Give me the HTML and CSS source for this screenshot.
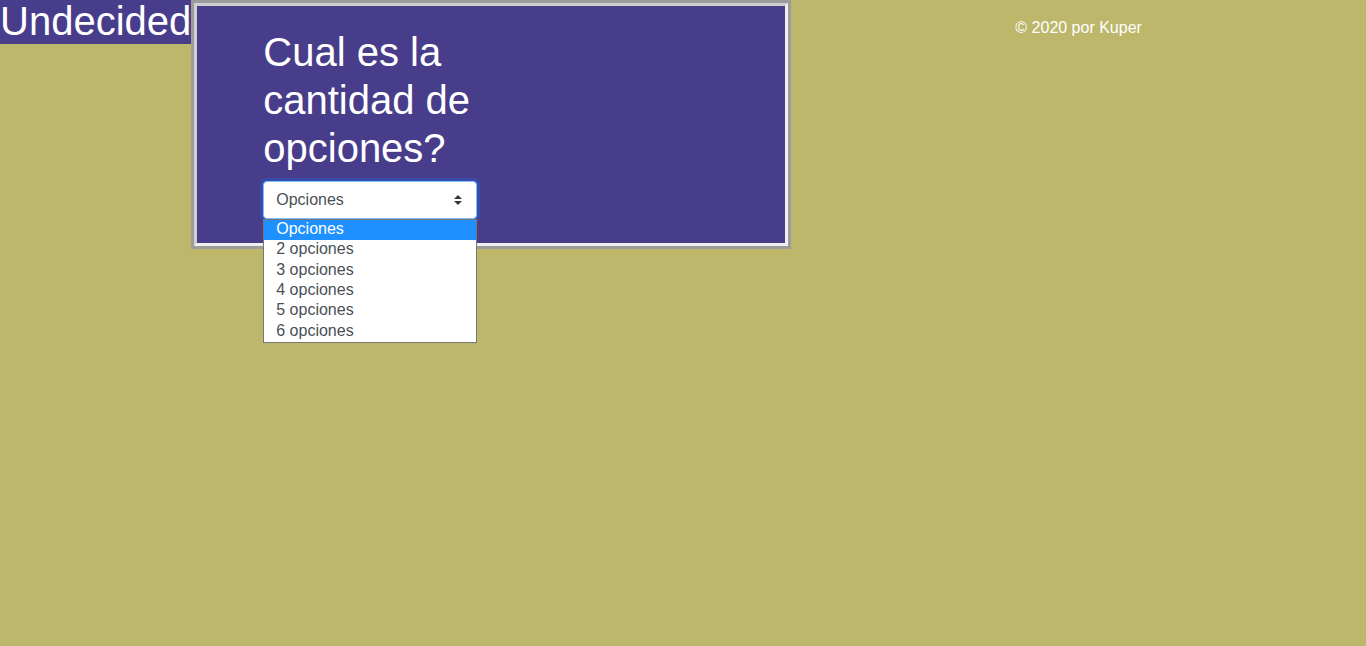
FILE: index.html
```html
<!DOCTYPE html>
<html lang="es">
<head>
<meta charset="utf-8">
<title>Undecided</title>
<link rel="stylesheet" href="styles.css">
</head>
<body>
<div class="page">
  <div class="brand">Undecided</div>
  <main class="panel">
    <div class="panel-inner">
      <div class="content">
        <h1 class="question">Cual es la cantidad de opciones?</h1>
        <div class="select-wrap">
          <div class="select">
            <span class="select-value">Opciones</span>
            <svg class="select-arrow" width="8" height="10" viewBox="0 0 4 5" aria-hidden="true"><path fill="#343a40" d="M2 0L0 2h4zm0 5L0 3h4z"/></svg>
          </div>
          <ul class="dropdown">
            <li class="option active">Opciones</li>
            <li class="option">2 opciones</li>
            <li class="option">3 opciones</li>
            <li class="option">4 opciones</li>
            <li class="option">5 opciones</li>
            <li class="option">6 opciones</li>
          </ul>
        </div>
      </div>
    </div>
  </main>
  <footer class="footer">© 2020 por Kuper</footer>
</div>
</body>
</html>
```
FILE: styles.css
```css
html, body {
  margin: 0;
  padding: 0;
}
body {
  background: #bdb76b;
  font-family: "Liberation Sans", Arial, sans-serif;
  color: #fff;
  font-size: 16px;
  line-height: 1.5;
}
.page {
  display: flex;
  align-items: flex-start;
  min-height: 646px;
}
.brand {
  background: #483d8b;
  color: #fff;
  font-size: 40px;
  line-height: 42px;
  padding-bottom: 2px;
  white-space: nowrap;
}
.panel {
  width: 600px;
  box-sizing: border-box;
  border: 3px solid #9c9c9c;
  flex-shrink: 0;
}
.panel-inner {
  background: #483d8b;
  border: 3px solid;
  border-color: #cfcfcf #f0f0f0 #f0f0f0 #cfcfcf;
  padding: 22px 0 24px 66px;
}
.content {
  width: 214px;
}
.question {
  font-size: 40px;
  font-weight: 500;
  line-height: 48px;
  margin: 0 0 9px;
  color: #fff;
}
.select-wrap {
  position: relative;
}
.select {
  display: flex;
  align-items: center;
  justify-content: space-between;
  height: 38px;
  box-sizing: border-box;
  padding: 0 14px 0 12px;
  background: #fff;
  border: 1px solid #80bdff;
  border-radius: 4px;
  box-shadow: 0 0 0 3px rgba(0, 123, 255, 0.25);
  color: #495057;
  font-size: 16px;
}
.select-arrow {
  display: block;
}
.dropdown {
  position: absolute;
  top: 38px;
  left: 0;
  width: 214px;
  box-sizing: border-box;
  margin: 0;
  padding: 0;
  list-style: none;
  background: #fff;
  border: 1px solid #767676;
  z-index: 2;
}
.option {
  height: 20.34px;
  line-height: 18px;
  padding-left: 12px;
  color: #495057;
  font-size: 16px;
}
.option.active {
  background: #1e90ff;
  color: #fff;
}
.footer {
  flex: 1;
  text-align: center;
  padding-top: 16px;
  color: #fff;
  font-size: 16px;
  line-height: 24px;
}
```
